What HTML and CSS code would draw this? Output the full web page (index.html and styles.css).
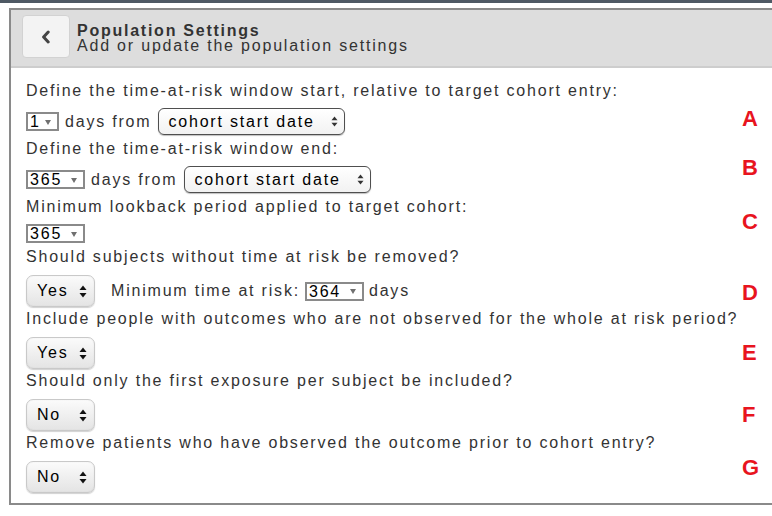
FILE: index.html
```html
<!DOCTYPE html>
<html>
<head>
<meta charset="utf-8">
<title>Population Settings</title>
<link rel="stylesheet" href="styles.css">
</head>
<body>
<div class="topbar"></div>
<div class="panel">
  <div class="panel-header">
    <button class="back-btn" type="button" aria-label="Back">
      <svg width="10" height="14" viewBox="0 0 10 14"><polyline points="7.2,2 2.6,7 7.2,12" fill="none" stroke="#444" stroke-width="3" stroke-linecap="round" stroke-linejoin="round"/></svg>
    </button>
    <div class="titles">
      <div class="title">Population Settings</div>
      <div class="subtitle">Add or update the population settings</div>
    </div>
  </div>
  <div class="panel-body">
    <div class="q">Define the time-at-risk window start, relative to target cohort entry:</div>
    <div class="row">
      <span class="numsel w1"><span class="val">1</span><i class="caret"></i></span>
      <span class="txt gap-a">days from</span>
      <span class="bigsel gap-b"><span class="val">cohort start date</span>
        <svg class="updown" width="7" height="11" viewBox="0 0 7 11"><polygon points="3.5,0.5 6.5,4.3 0.5,4.3" fill="#333"/><polygon points="0.5,6.7 6.5,6.7 3.5,10.5" fill="#333"/></svg>
      </span>
    </div>
    <div class="q">Define the time-at-risk window end:</div>
    <div class="row">
      <span class="numsel w3"><span class="val">365</span><i class="caret"></i></span>
      <span class="txt gap-a">days from</span>
      <span class="bigsel gap-b"><span class="val">cohort start date</span>
        <svg class="updown" width="7" height="11" viewBox="0 0 7 11"><polygon points="3.5,0.5 6.5,4.3 0.5,4.3" fill="#333"/><polygon points="0.5,6.7 6.5,6.7 3.5,10.5" fill="#333"/></svg>
      </span>
    </div>
    <div class="q">Minimum lookback period applied to target cohort:</div>
    <div class="row">
      <span class="numsel w3"><span class="val">365</span><i class="caret"></i></span>
    </div>
    <div class="q">Should subjects without time at risk be removed?</div>
    <div class="row mac-row">
      <span class="macsel"><span class="val">Yes</span>
        <svg class="updown" width="8" height="13" viewBox="0 0 8 13"><polygon points="4,0.5 7.5,5 0.5,5" fill="#111"/><polygon points="0.5,8 7.5,8 4,12.5" fill="#111"/></svg>
      </span>
      <span class="txt gap-c">Minimum time at risk:</span>
      <span class="numsel w3 gap-d"><span class="val">364</span><i class="caret"></i></span>
      <span class="txt gap-d">days</span>
    </div>
    <div class="q">Include people with outcomes who are not observed for the whole at risk period?</div>
    <div class="row mac-row">
      <span class="macsel"><span class="val">Yes</span>
        <svg class="updown" width="8" height="13" viewBox="0 0 8 13"><polygon points="4,0.5 7.5,5 0.5,5" fill="#111"/><polygon points="0.5,8 7.5,8 4,12.5" fill="#111"/></svg>
      </span>
    </div>
    <div class="q">Should only the first exposure per subject be included?</div>
    <div class="row mac-row">
      <span class="macsel"><span class="val">No</span>
        <svg class="updown" width="8" height="13" viewBox="0 0 8 13"><polygon points="4,0.5 7.5,5 0.5,5" fill="#111"/><polygon points="0.5,8 7.5,8 4,12.5" fill="#111"/></svg>
      </span>
    </div>
    <div class="q">Remove patients who have observed the outcome prior to cohort entry?</div>
    <div class="row mac-row">
      <span class="macsel"><span class="val">No</span>
        <svg class="updown" width="8" height="13" viewBox="0 0 8 13"><polygon points="4,0.5 7.5,5 0.5,5" fill="#111"/><polygon points="0.5,8 7.5,8 4,12.5" fill="#111"/></svg>
      </span>
    </div>
  </div>
</div>
<div class="mark m-a">A</div>
<div class="mark m-b">B</div>
<div class="mark m-c">C</div>
<div class="mark m-d">D</div>
<div class="mark m-e">E</div>
<div class="mark m-f">F</div>
<div class="mark m-g">G</div>
</body>
</html>
```
FILE: styles.css
```css
* { box-sizing: border-box; }
html, body { margin: 0; padding: 0; background: #fff; }
body {
  position: relative;
  width: 772px;
  height: 516px;
  overflow: hidden;
  font-family: "Liberation Sans", Arial, Helvetica, sans-serif;
  font-size: 16px;
  letter-spacing: 1.8px;
  color: #333;
}
.topbar { height: 3px; background: #4e5964; }
.panel {
  margin: 5px 0 0 9px;
  border: 2px solid #8a8a8a;
  border-right: none;
}
.panel-header {
  height: 58px;
  background: #dddddd;
  border-bottom: 2px solid #cdcdcd;
  display: flex;
  align-items: flex-start;
  padding: 5px 0 0 11px;
}
.back-btn {
  width: 48px;
  height: 43px;
  margin: 0;
  padding: 0;
  border: 1px solid #d2d2d2;
  border-radius: 4px;
  background: #f3f3f3;
  display: flex;
  align-items: center;
  justify-content: center;
}
.titles { margin: 8px 0 0 7px; }
.title, .subtitle { line-height: 15px; white-space: nowrap; }
.title { font-weight: bold; letter-spacing: 1.75px; }
.panel-body { padding: 13px 0 8px 15px; }
.q { line-height: 20px; white-space: nowrap; }
.row { display: flex; align-items: center; padding: 7px 0 4px; }
.row.mac-row { padding: 8px 0 2px; }
.txt { white-space: nowrap; line-height: 20px; }
.gap-a { margin-left: 6px; }
.gap-b { margin-left: 7px; }
.gap-c { margin-left: 16px; }
.gap-d { margin-left: 5px; }
.numsel {
  display: inline-flex;
  align-items: center;
  justify-content: space-between;
  height: 19px;
  border: 2px solid #8a8a8a;
  background: #fff;
  color: #000;
  padding: 0 6px 0 2px;
  line-height: 15px;
}
.w1 { width: 33px; }
.w3 { width: 59px; }
.caret {
  display: block;
  width: 0;
  height: 0;
  margin-top: 1px;
  border-left: 3px solid transparent;
  border-right: 3px solid transparent;
  border-top: 5px solid #707070;
}
.bigsel {
  display: inline-flex;
  align-items: center;
  justify-content: space-between;
  width: 187px;
  height: 27px;
  padding: 0 6px 0 9px;
  border: 1px solid #4f4f4f;
  border-radius: 6px;
  background: linear-gradient(#ffffff, #f2f2f2);
  box-shadow: 0 1px 1px rgba(0,0,0,0.25);
  color: #000;
  white-space: nowrap;
}
.macsel {
  display: inline-flex;
  align-items: center;
  justify-content: space-between;
  width: 69px;
  height: 32px;
  padding: 0 7px 0 10px;
  border: 1px solid #c9c9c9;
  border-radius: 7px;
  background: linear-gradient(#fbfbfb, #e4e4e4);
  box-shadow: 0 1px 1px rgba(0,0,0,0.18), inset 0 0 2px rgba(0,0,0,0.06);
  color: #000;
}
.updown { display: block; flex: none; }
.mark {
  position: absolute;
  left: 742px;
  font-family: "Liberation Sans", Arial, sans-serif;
  font-weight: bold;
  font-size: 22px;
  line-height: 24px;
  letter-spacing: 0;
  color: #e8141e;
}
.m-a { top: 107px; }
.m-b { top: 156px; }
.m-c { top: 210px; }
.m-d { top: 281px; }
.m-e { top: 341px; }
.m-f { top: 403px; }
.m-g { top: 456px; }
```
